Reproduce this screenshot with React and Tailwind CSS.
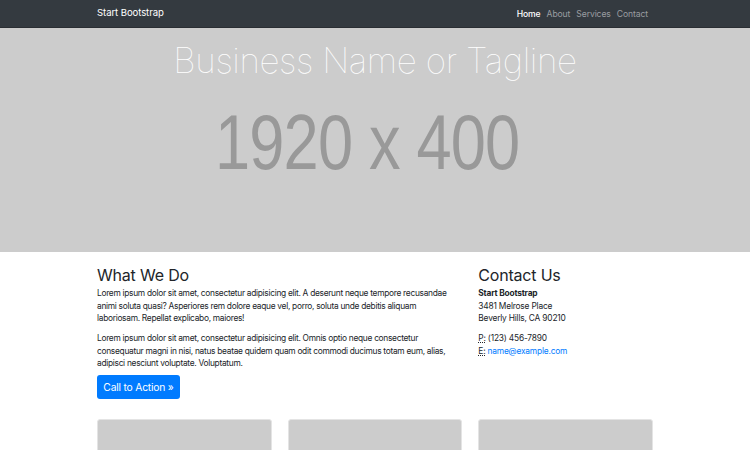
export default function App() {
  const body = { fontFamily: 'Inter, "Liberation Sans", sans-serif' };
  return (
    <div className="w-[750px] min-h-[450px] bg-white text-[#212529] overflow-hidden" style={body}>
      <nav className="h-[28px] bg-[#343a40] border-b border-[#2a2e33]">
        <div className="w-[556px] mx-auto h-full flex items-center justify-between">
          <span className="text-white text-[9.6px] tracking-[-0.1px]">Start Bootstrap</span>
          <div className="flex gap-[6px] text-[8.6px] pr-[5px] tracking-[-0.1px] pt-[1px]">
            <span className="text-white font-medium">Home</span>
            <span className="text-[#9a9da0]">About</span>
            <span className="text-[#9a9da0]">Services</span>
            <span className="text-[#9a9da0]">Contact</span>
          </div>
        </div>
      </nav>
      <header className="h-[224px] bg-[#cccccc] flex flex-col items-center">
        <h1 className="mt-[10px] text-white text-[35px] font-thin leading-[44px] tracking-[-0.4px]">Business Name or Tagline</h1>
        <div className="mt-[20px] text-[#999999] text-[77px] leading-[80px] tracking-[-1px] pr-[18px] scale-x-[0.82]" style={{ fontFamily: '"Liberation Sans", Arial, sans-serif' }}>1920 x 400</div>
      </header>
      <main className="w-[556px] mx-auto">
        <div className="flex gap-[16px] pt-[12px]">
          <div className="w-[366px]">
            <h2 className="text-[16px] leading-[22px] mb-[1px] tracking-[-0.2px]">What We Do</h2>
            <p className="text-[8.4px] leading-[12.5px] mb-[7.5px] tracking-[-0.3px]">Lorem ipsum dolor sit amet, consectetur adipisicing elit. A deserunt neque tempore recusandae<br />animi soluta quasi? Asperiores rem dolore eaque vel, porro, soluta unde debitis aliquam<br />laboriosam. Repellat explicabo, maiores!</p>
            <p className="text-[8.4px] leading-[12.5px] mb-[3px] tracking-[-0.3px]">Lorem ipsum dolor sit amet, consectetur adipisicing elit. Omnis optio neque consectetur<br />consequatur magni in nisi, natus beatae quidem quam odit commodi ducimus totam eum, alias,<br />adipisci nesciunt voluptate. Voluptatum.</p>
            <button className="h-[24px] w-[83px] rounded-[3px] bg-[#007bff] text-white text-[10.3px] tracking-[-0.2px]">Call to Action »</button>
          </div>
          <div className="w-[175px]">
            <h2 className="text-[16px] leading-[22px] mb-[1px] tracking-[-0.2px]">Contact Us</h2>
            <div className="text-[8.4px] leading-[12.5px] mb-[7.5px] tracking-[-0.2px]">
              <div className="font-bold">Start Bootstrap</div>
              <div>3481 Melrose Place</div>
              <div>Beverly Hills, CA 90210</div>
            </div>
            <div className="text-[8.4px] leading-[12.5px] tracking-[-0.2px]">
              <div><span className="underline decoration-dotted">P:</span> (123) 456-7890</div>
              <div><span className="underline decoration-dotted">E:</span> <span className="text-[#007bff]">name@example.com</span></div>
            </div>
          </div>
        </div>
        <div className="grid grid-cols-3 gap-[16px] mt-[20px]">
          <div className="h-[40px] bg-[#cccccc] rounded-t-[3px] border border-[#e4e4e4]"></div>
          <div className="h-[40px] bg-[#cccccc] rounded-t-[3px] border border-[#e4e4e4]"></div>
          <div className="h-[40px] bg-[#cccccc] rounded-t-[3px] border border-[#e4e4e4]"></div>
        </div>
      </main>
    </div>
  );
}
